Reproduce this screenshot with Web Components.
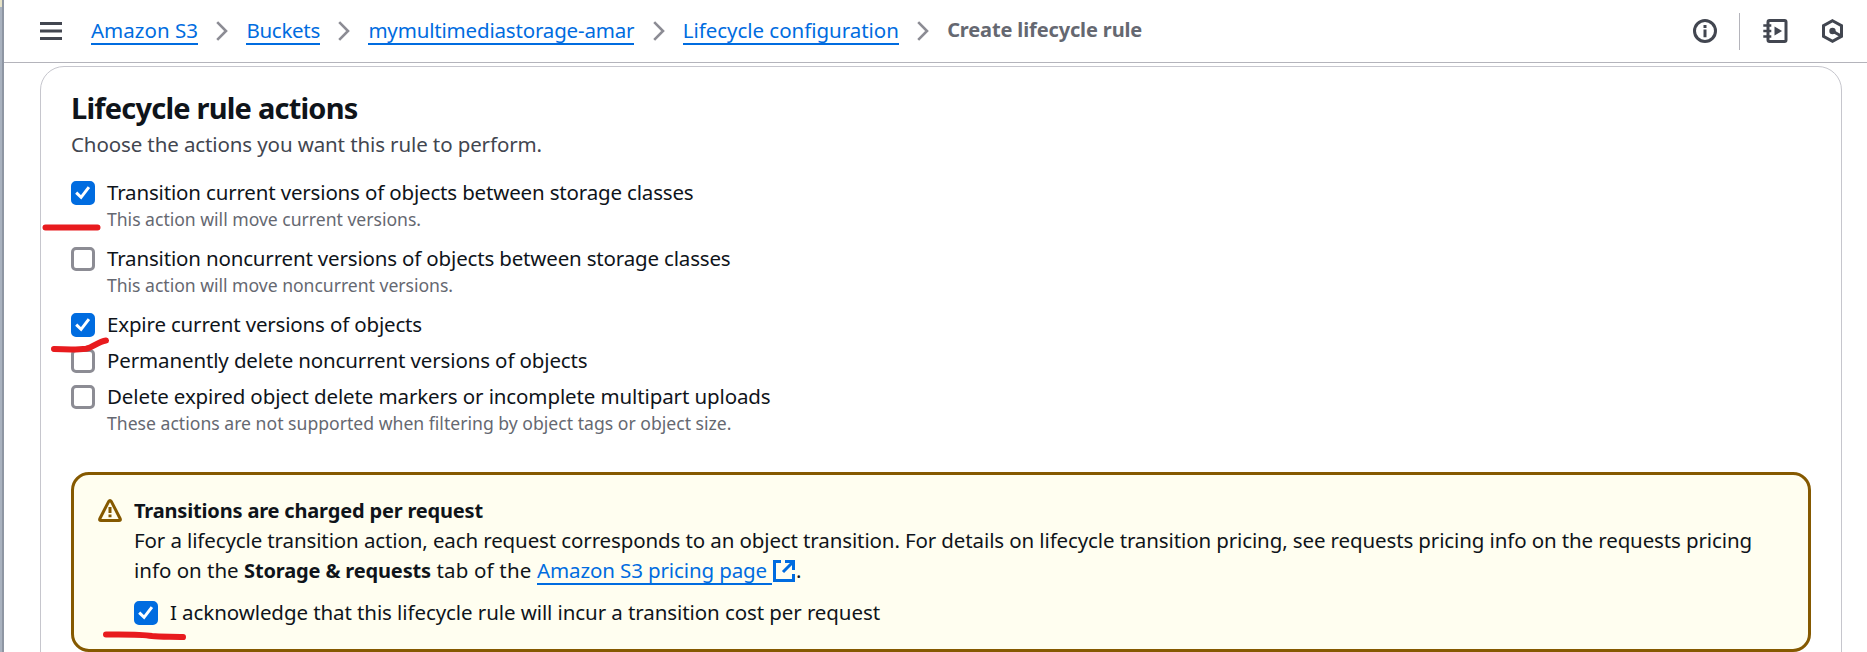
<!DOCTYPE html>
<html lang="en">
<head>
<meta charset="utf-8">
<title>Create lifecycle rule</title>
<style>
html,body{margin:0;height:652px;overflow:hidden;background:#fff}
body{font-family:"Noto Sans","Open Sans",sans-serif;font-size:20.5px;line-height:30px;color:#0f141a}
</style>
</head>
<body>
<console-page></console-page>
<script>
const define=(name,html,init)=>{
  const t=document.createElement('template');t.innerHTML=html;
  customElements.define(name,class extends HTMLElement{
    constructor(){super();this.attachShadow({mode:'open'}).append(t.content.cloneNode(true));}
    connectedCallback(){if(init)init.call(this,this.shadowRoot);}
  });
};

/* One run of text tracked to a given advance width */
define('fit-text','<style>:host{display:inline-block;white-space:pre;vertical-align:baseline}</style><slot></slot>',function(){
  const w=parseFloat(this.getAttribute('w')),n=this.textContent.length;
  this.style.letterSpacing='0';
  const natural=this.getBoundingClientRect().width;
  const s=(w-natural)/n;
  this.style.letterSpacing=s.toFixed(4)+'px';
  this.style.width=w+'px';
});

define('check-box',`<style>
:host{display:block;box-sizing:border-box;width:24px;height:24px;flex:none;border:3px solid #8c8c94;border-radius:5px;background:#fff}
:host([checked]){border-color:#006ce0;background:#006ce0}
svg{display:none;margin:-3px}
:host([checked]) svg{display:block}
</style><svg width="24" height="24" fill="none" stroke="#fff" stroke-width="3"><path d="M5.2 11.6 10.1 16.3 17.9 6.2"/></svg>`);

define('check-field',`<style>
:host{display:flex;gap:12px}
check-box{margin-top:4px}
.l{height:30px;white-space:nowrap}
::slotted([slot=hint]){display:block;height:24px;font-size:17.6px;line-height:25px;color:#656871;white-space:nowrap}
</style><check-box></check-box><div><div class="l"><slot></slot></div><slot name="hint"></slot></div>`,function(r){
  r.querySelector('check-box').toggleAttribute('checked',this.hasAttribute('checked'));
});

define('crumb-link',`<style>
:host{display:flex;align-items:center}
span{display:block;color:#006ce0;height:30px;box-sizing:border-box;border-bottom:2px solid #006ce0;line-height:30px;margin-top:-2px}
svg{margin:0 18px 0 18.4px;flex:none}
</style><span><slot></slot></span><svg width="12" height="20" fill="none" stroke="#8c8c94" stroke-width="2.6"><path d="M1.2 1.2 10 10 1.2 18.8"/></svg>`);

define('top-bar',`<style>
:host{display:flex;align-items:center;box-sizing:border-box;height:63px;padding:0 23px 0 36px;border-bottom:1px solid #b4b4bb;background:#fff}
.menu{margin-right:29px}
nav{display:flex;align-items:center;flex:1;height:30px}
b{color:#656871;font-size:20px;margin-top:-2px}
.tools{display:flex;align-items:center}
i{width:1px;height:37px;background:#b4b4bb;margin:0 23px 0 22px}
svg{display:block;flex:none}
</style>
<svg class="menu" width="22" height="18" fill="#424650"><path d="M0 0h22v3H0zM0 7.5h22v3H0zM0 15h22v3H0z"/></svg>
<nav>
<crumb-link><fit-text w="107">Amazon S3</fit-text></crumb-link>
<crumb-link><fit-text w="73.6">Buckets</fit-text></crumb-link>
<crumb-link><fit-text w="266">mymultimediastorage-amar</fit-text></crumb-link>
<crumb-link><fit-text w="216">Lifecycle configuration</fit-text></crumb-link>
<b><fit-text w="195">Create lifecycle rule</fit-text></b>
</nav>
<div class="tools">
<svg width="24" height="24" fill="none" stroke="#424650" stroke-width="3"><circle cx="12" cy="12" r="10.5"/><path d="M12 10.5v7.8M12 6v3"/></svg>
<i></i>
<svg width="25" height="24" fill="none" stroke="#424650" stroke-width="3"><path d="M5 6.5V3Q5 1.500 6.500 1.500H21.500Q23 1.500 23 3V21Q23 22.500 21.500 22.500H6.500Q5 22.500 5 21V17.500M5 5v14" /><path stroke-width="2.700" d="M.3 6.500h8M.3 12h8M.3 17.500h8"/><path fill="#424650" stroke="none" d="M11.500 7.500 19 12l-7.500 4.500z"/></svg>
<svg style="margin-left:33px" width="23" height="24" fill="none" stroke="#424650" stroke-width="3"><path d="M11.500 1.800 20.500 6.700V17.300L11.500 22.200 2.500 17.300V6.700Z"/><path d="M11.500 12 20 17"/><circle cx="11.500" cy="12" r="3.200" fill="#424650" stroke="none"/></svg>
</div>`);

define('warning-alert',`<style>
:host{display:flex;gap:12px;box-sizing:border-box;height:180px;border:3px solid #855900;border-radius:18px;background:#fffef0;padding:20px 24px 0 24px}
svg{display:block;margin-top:3.500px;flex:none}
</style><svg width="24" height="24" fill="none" stroke="#855900" stroke-width="3" stroke-linejoin="round"><path d="M10.600 2.600Q12 .6 13.400 2.600L22.200 19.700Q22.900 21.500 21 21.500H3Q1.100 21.500 1.800 19.700Z"/><path d="M12 8v6M12 15.500v2.800"/></svg><div><slot></slot></div>`);

define('ext-link',`<style>
:host{display:inline-flex;color:#006ce0;height:30px;vertical-align:top}
span{box-sizing:border-box;height:30px;border-bottom:2px solid #006ce0;padding-right:5px}
svg{display:block;margin:5px 1px 0 1px}
</style><span><slot></slot></span><svg width="22" height="22" fill="none" stroke="#006ce0" stroke-width="3"><path d="M8 1.500H1.500V20.500H20.500V14M12 1.500H20.500V10M20 2 10 12"/></svg>`);

define('rule-panel',`<style>
:host{display:block;box-sizing:border-box;height:640px;margin:3px 25px 0 36px;border:1px solid #c6c6cd;border-radius:24px;padding:23px 30px 0;background:#fff}
h2{margin:0;font-size:29px;line-height:36px}
p{margin:3px 0 18px;height:30px;color:#424650}
b{font-size:20px}
.list{display:flex;flex-direction:column;gap:6px;margin-bottom:37px}
.wide{margin-bottom:6px}
.line{height:30px;white-space:nowrap}
.ack{margin-top:12px}
</style>
<h2><fit-text w="286.500">Lifecycle rule actions</fit-text></h2>
<p><fit-text w="471">Choose the actions you want this rule to perform.</fit-text></p>
<div class="list">
<check-field class="wide" checked><fit-text w="586.500">Transition current versions of objects between storage classes</fit-text><div slot="hint"><fit-text w="314">This action will move current versions.</fit-text></div></check-field>
<check-field class="wide"><fit-text w="623.500">Transition noncurrent versions of objects between storage classes</fit-text><div slot="hint"><fit-text w="346">This action will move noncurrent versions.</fit-text></div></check-field>
<check-field checked><fit-text w="315">Expire current versions of objects</fit-text></check-field>
<check-field><fit-text w="480.500">Permanently delete noncurrent versions of objects</fit-text></check-field>
<check-field><fit-text w="663.500">Delete expired object delete markers or incomplete multipart uploads</fit-text><div slot="hint"><fit-text w="624.500">These actions are not supported when filtering by object tags or object size.</fit-text></div></check-field>
</div>
<warning-alert>
<div class="line"><b><fit-text w="349">Transitions are charged per request</fit-text></b></div>
<div class="line"><fit-text w="1618">For a lifecycle transition action, each request corresponds to an object transition. For details on lifecycle transition pricing, see requests pricing info on the requests pricing</fit-text></div>
<div class="line"><fit-text w="110">info on the </fit-text><b><fit-text w="187">Storage &amp; requests</fit-text></b><fit-text w="106"> tab of the </fit-text><ext-link><fit-text w="230">Amazon S3 pricing page</fit-text></ext-link>.</div>
<check-field class="ack" checked><fit-text w="710">I acknowledge that this lifecycle rule will incur a transition cost per request</fit-text></check-field>
</warning-alert>`);

/* Freehand pen marks lying over the page */
define('pen-marks',`<style>:host{position:absolute;inset:0;pointer-events:none}svg{display:block}</style>
<svg width="1867" height="652" fill="none" stroke="#e81b1e" stroke-width="6" stroke-linecap="round" stroke-linejoin="round"><path d="M45.500 227.500H97.500M54 349C66 349.500 80 349.500 86 348.700 93 347.500 98 341.500 106 340.500M106 634.500C122 634.500 140 634 152 636 160 637 172 636.500 183 637"/></svg>`);

define('console-page',`<style>
:host{display:flex;position:relative;height:652px;overflow:hidden}
.edge{width:4px;flex:none;box-sizing:border-box;border-right:2px solid #8e96a3;background:linear-gradient(#e6e3c8 7px,#a9b2bf 7px)}
main{flex:1;min-width:0}
</style><div class="edge"></div><main><top-bar></top-bar><rule-panel></rule-panel></main><pen-marks></pen-marks>`);
</script>
</body>
</html>
